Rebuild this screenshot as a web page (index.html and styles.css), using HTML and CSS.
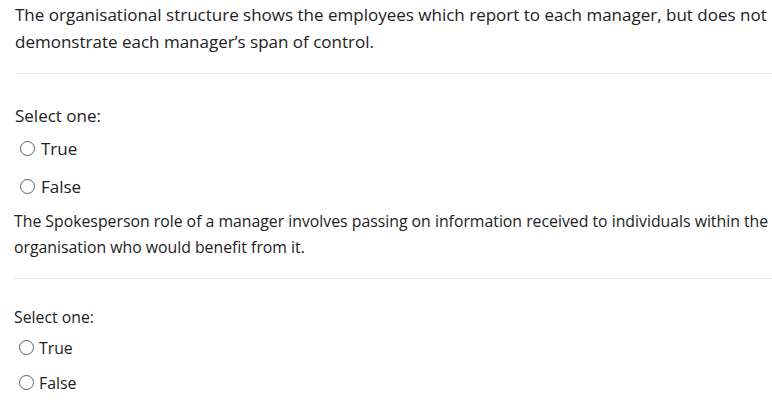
FILE: index.html
```html
<!DOCTYPE html>
<html lang="en">
<head>
<meta charset="utf-8">
<link rel="stylesheet" href="styles.css">
</head>
<body>
<div class="q q1">
  <div class="qtext">The organisational structure shows the employees which report to each manager, but does not demonstrate each manager’s span of control.</div>
  <hr class="sep">
  <div class="prompt">Select one:</div>
  <div class="answer">
    <label class="opt"><span class="radio"></span><span>True</span></label>
    <label class="opt"><span class="radio"></span><span>False</span></label>
  </div>
</div>
<div class="q q2">
  <div class="qtext">The Spokesperson role of a manager involves passing on information received to individuals within the organisation who would benefit from it.</div>
  <hr class="sep">
  <div class="prompt">Select one:</div>
  <div class="answer">
    <label class="opt"><span class="radio"></span><span>True</span></label>
    <label class="opt"><span class="radio"></span><span>False</span></label>
  </div>
</div>
</body>
</html>
```
FILE: styles.css
```css
html, body {
  margin: 0;
  padding: 0;
  background: #fff;
}
body {
  width: 772px;
  height: 400px;
  overflow: hidden;
  color: #1d2125;
  font-family: "Open Sans", "Noto Sans", sans-serif;
}
.q1 {
  padding: 1px 0 0 15px;
  font-size: 17px;
}
.q2 {
  padding: 3px 0 0 14px;
  font-size: 15.8px;
}
.qtext {
  line-height: 27px;
}
.q2 .qtext {
  line-height: 26px;
}
.sep {
  border: 0;
  border-top: 1px solid #e9e9e9;
  margin: 18px 0 0;
  height: 0;
}
.prompt {
  line-height: 26px;
  margin-top: 29px;
}
.q2 .prompt {
  margin-top: 25px;
}
.answer {
  display: flex;
  flex-direction: column;
}
.opt {
  display: flex;
  align-items: center;
  height: 38px;
  padding-left: 5px;
  gap: 6px;
}
.q2 .opt {
  height: 35px;
  gap: 5px;
}
.radio {
  width: 13px;
  height: 13px;
  border: 1px solid #5f5f5f;
  border-radius: 50%;
  box-sizing: content-box;
  flex: none;
}
```
